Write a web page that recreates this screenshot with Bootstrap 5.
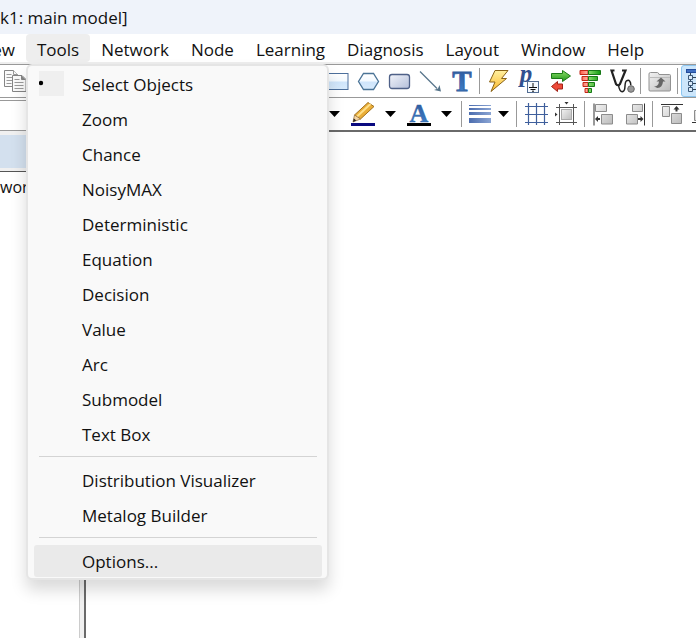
<!DOCTYPE html>
<html lang="en">
<head>
<meta charset="utf-8">
<meta name="viewport" content="width=device-width, initial-scale=1">
<title>Network1: main model</title>
<link href="https://cdn.jsdelivr.net/npm/bootstrap@5.3.0/dist/css/bootstrap.min.css" rel="stylesheet">
<style>
  body { font-family: "Open Sans", "Noto Sans", sans-serif; font-size: 17px; line-height: 24px; color: #111; background: #fff; }
  .app { min-height: 100vh; }
  .titlebar { height: 34px; background: #eff3fa; line-height: 36px; }
  .menubar { height: 31px; border-bottom: 1px solid #999; background: linear-gradient(#fff 28px, #eee 28px); }
  .menubar .menu-btn { height: 28px; padding: 4px 11px 0; font-size: inherit; line-height: 24px; border: 0; border-radius: 4px; color: #111; }
  .menubar .menu-first { width: 26px; padding-left: 0; display: flex; justify-content: flex-end; }
  .menubar .menu-btn.show { background: #eee; }
  .tools-menu.dropdown-menu { display: block; top: 100%; left: 0; width: 303px; margin: 0; padding: 1px 5px 1px 6px; font-size: inherit; color: #111; background: #f9f9f9; border: 2px solid #e5e5e5; border-radius: 6px; box-shadow: 0 10px 16px rgba(0,0,0,.15); }
  .tools-menu .dropdown-item { height: 35px; padding: 6px 0 5px 48px; line-height: 24px; color: #111; border-radius: 3px; position: relative; }
  .tools-menu .dropdown-item.current { height: 32px; margin-top: 7px; padding-top: 5px; background: #eaeaea; }
  .tools-menu .dropdown-divider { margin: 4px 5px 6px; border-color: #d4d4d4; opacity: 1; }
  .bullet-box { position: absolute; left: 5px; top: 4px; width: 25px; height: 25px; background: #efefef; }
  .toolbar { height: 33px; overflow: hidden; }
  .toolbar-main { border-bottom: 1px solid #999; }
  .toolbar-format { height: 32px; align-items: center; }
  .tool { flex: 0 0 31px; height: 32px; padding: 0; border: 0; background: none; display: flex; align-items: center; justify-content: center; }
  .tool-caret { flex-basis: 25px; }
  .tool-line { flex-basis: 29px; }
  .tool-caret-sm { flex-basis: 20px; }
  .tool-on { background: #cce6fb; border: 1px solid #8cc6f0; border-radius: 3px; justify-content: flex-start; padding-left: 3px; }
  .tool text { font-family: "Liberation Serif", serif; font-weight: 700; text-anchor: middle; }
  .rule { flex: 0 0 6px; height: 26px; margin-top: 3px; background: linear-gradient(90deg, transparent 2px, #999 2px, #999 3px, transparent 3px); }
  .toolbar-format .rule { margin-top: 0; }
  .gap-main { flex: 0 0 291px; }
  .font-box { flex: 0 0 322px; height: 30px; margin-top: 2px; border: 0; border-top: 1px solid #999; background: #fff; border-radius: 0; }
  .tree-pane { flex: 0 0 84px; background: #f0f0f0; border-top: 1px solid #999; padding-top: 4px; }
  .tree-head { height: 33px; background: #d3e0ee; margin-bottom: 3px; }
  .tree-body { border-top: 1px solid #555; border-right: 1px solid #ccc; background: #fff; margin-right: 4px; padding-top: 3px; font-size: 16px; }
  .canvas-pane { border-top: 2px solid #6a6a6a; border-left: 2px solid #6a6a6a; }
</style>
<script src="https://cdn.jsdelivr.net/npm/bootstrap@5.3.0/dist/js/bootstrap.bundle.min.js"></script>
</head>
<body>
<svg width="0" height="0" class="position-absolute" aria-hidden="true">
  <defs>
    <linearGradient id="gBlue" x1="0" y1="0" x2="0" y2="1"><stop offset="0" stop-color="#fff"/><stop offset=".45" stop-color="#f4faff"/><stop offset=".55" stop-color="#cfe5fb"/><stop offset="1" stop-color="#d9ebfc"/></linearGradient>
    <linearGradient id="gSub" x1="0" y1="0" x2="1" y2="1"><stop offset="0" stop-color="#f2f4fa"/><stop offset="1" stop-color="#b4bfda"/></linearGradient>
    <linearGradient id="gBolt" x1="0" y1="0" x2="0" y2="1"><stop offset="0" stop-color="#fff0a0"/><stop offset="1" stop-color="#fbb82a"/></linearGradient>
    <linearGradient id="gText" x1="0" y1="0" x2="0" y2="1"><stop offset="0" stop-color="#2d5597"/><stop offset="1" stop-color="#3f86d0"/></linearGradient>
    <linearGradient id="gGrey" x1="0" y1="0" x2="1" y2="1"><stop offset="0" stop-color="#f2f2f2"/><stop offset="1" stop-color="#bcbcbc"/></linearGradient>
    <linearGradient id="gGreen" x1="0" y1="0" x2="0" y2="1"><stop offset="0" stop-color="#8ee06a"/><stop offset="1" stop-color="#1d9418"/></linearGradient>
    <linearGradient id="gBars" x1="0" y1="0" x2="1" y2="0"><stop offset="0" stop-color="#8ade6e"/><stop offset="1" stop-color="#119a11"/></linearGradient>
    <linearGradient id="gRed" x1="0" y1="0" x2="1" y2="0"><stop offset="0" stop-color="#ff5c48"/><stop offset="1" stop-color="#ffb4a6"/></linearGradient>
    <linearGradient id="gBar" x1="0" y1="0" x2="1" y2="0"><stop offset="0" stop-color="#4b6cae"/><stop offset="1" stop-color="#8ba5d4"/></linearGradient>
  </defs>
</svg>
<div class="app d-flex flex-column">
  <header class="titlebar text-nowrap">k1: main model]</header>
  <nav class="menubar d-flex" aria-label="Main menu">
    <button type="button" class="btn menu-btn menu-first" aria-label="View">ew</button>
    <div class="dropdown">
      <button type="button" class="btn menu-btn show" aria-expanded="true">Tools</button>
      <div class="dropdown-menu tools-menu">
        <a class="dropdown-item" href="#"><span class="bullet-box"><svg class="d-block" width="25" height="25"><circle cx="2" cy="12" r="2.2" fill="#000"/></svg></span>Select Objects</a>
        <a class="dropdown-item" href="#">Zoom</a>
        <a class="dropdown-item" href="#">Chance</a>
        <a class="dropdown-item" href="#">NoisyMAX</a>
        <a class="dropdown-item" href="#">Deterministic</a>
        <a class="dropdown-item" href="#">Equation</a>
        <a class="dropdown-item" href="#">Decision</a>
        <a class="dropdown-item" href="#">Value</a>
        <a class="dropdown-item" href="#">Arc</a>
        <a class="dropdown-item" href="#">Submodel</a>
        <a class="dropdown-item" href="#">Text Box</a>
        <hr class="dropdown-divider">
        <a class="dropdown-item" href="#">Distribution Visualizer</a>
        <a class="dropdown-item" href="#">Metalog Builder</a>
        <hr class="dropdown-divider">
        <a class="dropdown-item current" href="#">Options...</a>
      </div>
    </div>
    <button type="button" class="btn menu-btn">Network</button>
    <button type="button" class="btn menu-btn">Node</button>
    <button type="button" class="btn menu-btn">Learning</button>
    <button type="button" class="btn menu-btn">Diagnosis</button>
    <button type="button" class="btn menu-btn">Layout</button>
    <button type="button" class="btn menu-btn">Window</button>
    <button type="button" class="btn menu-btn">Help</button>
  </nav>

  <div class="toolbar toolbar-main d-flex">
    <button type="button" class="tool" aria-label="Copy"><svg width="24" height="24" fill="#fafafa" stroke="#858585"><path d="M.5 1.500h9l4 4v12h-13z"/><path d="M9.500 1.500v4h4M2.500 5.500h5M2.500 8.500h7M2.500 11.500h7M2.500 14.500h5" stroke="#999"/><path d="M8.500 6.500h9.500l4 4v12H8.500z"/><path d="M17.500 6.500v4h4" fill="#888"/><path d="M10.500 10.500h5M10.500 13.500h9M10.500 16.500h9M10.500 19.500h9" stroke="#999"/></svg></button>
    <div class="gap-main"></div>
    <button type="button" class="tool" aria-label="Equation"><svg width="24" height="24"><rect x="1" y="4.500" width="21" height="16" fill="url(#gBlue)" stroke="#4c6f9c"/></svg></button>
    <button type="button" class="tool" aria-label="Decision"><svg width="24" height="24"><path d="M6.500 4.500h10l5 8-5 8h-10l-5-8z" fill="url(#gBlue)" stroke="#4a7396" stroke-width="1.300"/></svg></button>
    <button type="button" class="tool" aria-label="Submodel"><svg width="24" height="24"><rect x="1.500" y="5.500" width="20" height="14" rx="2.500" fill="url(#gSub)" stroke="#4f6188" stroke-width="1.300"/></svg></button>
    <button type="button" class="tool" aria-label="Arc"><svg width="24" height="24"><path d="M1 2.500L18 19.500" stroke="#56748a" stroke-width="1.300"/><path d="M22 22.500l-1.500-6.500-1.500 3.500-4 1.500z" fill="#56748a"/></svg></button>
    <button type="button" class="tool" aria-label="Text box"><svg width="24" height="24"><text x="12" y="22" font-size="29" fill="url(#gText)" stroke="#335f9e" stroke-width=".8">T</text></svg></button>
    <span class="rule"></span>
    <button type="button" class="tool" aria-label="Update"><svg width="24" height="24"><path d="M8 1.500h13l-6.500 8h5L4 22.500l4-9.500H2.500z" fill="url(#gBolt)" stroke="#8a6418"/></svg></button>
    <button type="button" class="tool" aria-label="Probability of evidence"><svg width="24" height="26"><text x="8" y="14" font-size="25" font-style="italic" fill="#315190">p</text><rect x="9.500" y="13.500" width="11" height="11" fill="#f5faff" stroke="#536d92"/><path d="M15 15v4M11 19.500h8M12.500 21.500h5M14 23.200h2" stroke="#111"/></svg></button>
    <button type="button" class="tool" aria-label="Compare"><svg width="24" height="26"><path d="M2.500 5.500h11V2.500l8 5.500-8 5.500v-3h-11z" fill="url(#gGreen)" stroke="#1b7a16"/><path d="M13.500 16h-5v-2.500L2.500 18.500l6 5V21h5z" fill="#ee4a38" stroke="#a32318"/></svg></button>
    <button type="button" class="tool" aria-label="Strength"><svg width="26" height="26"><g fill="url(#gRed)" stroke="#c22718"><path d="M1 2.500h8v4H1zM3 8.500h6v4H3zM4 14.500h5v4H4zM6 20.500h3v4H6z"/></g><g fill="url(#gBars)" stroke="#177817"><path d="M9.500 2.500h12v4h-12zM9.500 8.500h9v4h-9zM9.500 14.500h6v4h-6zM9.500 20.500h3v4h-3z"/></g></svg></button>
    <button type="button" class="tool" aria-label="Diagnosis"><svg width="26" height="26" fill="none" stroke="#222" stroke-width="2.200"><path d="M4.500 2.500H1.500L6 16q2 2.500 4 0L15.500 2.500h-3.500"/><path d="M8.500 17q1 7.500 4.500 6.500c3.500-1 .5-9 3.800-10.800 2.500-1.200 4 1 4 4.500" stroke-width="1.500"/><circle cx="21" cy="21" r="3.300" fill="#999" stroke="#666" stroke-width="1"/></svg></button>
    <span class="rule"></span>
    <button type="button" class="tool" aria-label="Up one level"><svg width="24" height="24"><path d="M1 21V5q0-1.500 1.500-1.500h7q1 0 1.500 2h10.500q1 0 1 1V21q0 1-1 1H2q-1 0-1-1z" fill="url(#gGrey)" stroke="#929292"/><path d="M2 8.500h20" stroke="#bbb"/><path d="M6 17.500q4.500 0 5-5H8.500L13 8.500l4.500 4H15q-.5 6-5.500 6.500z" fill="#666"/></svg></button>
    <span class="rule"></span>
    <button type="button" class="tool tool-on" aria-label="Tree view"><svg width="26" height="28"><path d="M5.500 6v17M5 10.500h10M5 16.500h10M5 22.500h10" stroke="#345"/><rect x="1.500" y="2.500" width="20" height="3" fill="#3f6fc2" stroke="#234d9c"/><path d="M3.500 8.500h4v4h-4zM3.500 14.500h4v4h-4zM3.500 20.500h4v4h-4zM11.500 8.500h9v4h-9zM11.500 14.500h9v4h-9zM11.500 20.500h9v4h-9z" fill="#dbeaf8" stroke="#3b5878"/></svg></button>
  </div>

  <div class="toolbar toolbar-format d-flex">
    <input class="font-box" type="text" aria-label="Font">
    <button type="button" class="tool tool-caret" aria-label="Fill colour choices"><svg width="12" height="6"><path d="M0 0h11l-5.500 6z"/></svg></button>
    <button type="button" class="tool" aria-label="Line colour"><svg width="26" height="26"><path d="M1 22h24v3H1z" fill="#0a0a80"/><path d="M18 1.500l6 4L10.500 18l-6-4z" fill="#eaae38" stroke="#a1701d"/><path d="M20.500 3L7 15.500" stroke="#ffe08a" stroke-width="2"/><path d="M4.500 14l6 4L3 21z" fill="#f5d5a3" stroke="#8f6a35" stroke-width=".7"/><path d="M3.800 17.500l2.500 2L3 21z" fill="#222"/></svg></button>
    <button type="button" class="tool tool-caret" aria-label="Line colour choices"><svg width="12" height="6"><path d="M0 0h11l-5.500 6z"/></svg></button>
    <button type="button" class="tool" aria-label="Text colour"><svg width="26" height="26"><path d="M1 22h24v3H1z"/><text x="13" y="21" font-size="26" fill="url(#gText)" stroke="#335f9e" stroke-width=".4">A</text></svg></button>
    <button type="button" class="tool tool-caret" aria-label="Text colour choices"><svg width="12" height="6"><path d="M0 0h11l-5.500 6z"/></svg></button>
    <span class="rule"></span>
    <button type="button" class="tool tool-line" aria-label="Line width"><svg width="24" height="20" fill="url(#gBar)"><path d="M1 1h22v1H1zM1 4h22v2H1zM1 8h22v3H1zM1 14h22v5H1z"/></svg></button>
    <button type="button" class="tool tool-caret-sm" aria-label="Line width choices"><svg width="12" height="6"><path d="M0 0h11l-5.500 6z"/></svg></button>
    <span class="rule"></span>
    <button type="button" class="tool" aria-label="Show grid"><svg width="24" height="24" fill="none"><path d="M4.500 1v22M12.500 1v22M20.500 1v22M1 4.500h23M1 12.500h23M1 20.500h23" stroke="#3f5f9c" stroke-width="1.200"/></svg></button>
    <button type="button" class="tool" aria-label="Snap to grid"><svg width="24" height="26" fill="none" stroke="#555"><path d="M4.500 3v21M18.500 3v21M1 6.500h21M1 21.500h21"/><rect x="6.500" y="8.500" width="10" height="10" fill="url(#gGrey)" stroke="#aaa"/><path d="M9.500 1h4l-2 2.500zM0 11.500v4l2.500-2z" fill="#333" stroke="none"/></svg></button>
    <span class="rule"></span>
    <button type="button" class="tool" aria-label="Align left"><svg width="24" height="24"><path d="M2 1.500v22" stroke="#333"/><path d="M3.500 2.500h11v7h-11zM9.500 12.500h11v9.500h-11z" fill="url(#gGrey)" stroke="#8c8c8c"/><path d="M8 17H5" stroke="#333" stroke-width="2"/><path d="M3 17l3-3v6z" fill="#333"/></svg></button>
    <button type="button" class="tool" aria-label="Align right"><svg width="24" height="24"><path d="M21.500 1.500v22" stroke="#333"/><path d="M9.500 2.500h10v7h-10zM3.500 12.500h11v9.500h-11z" fill="url(#gGrey)" stroke="#8c8c8c"/><path d="M15 17h3" stroke="#333" stroke-width="2"/><path d="M20.500 17l-3-3v6z" fill="#333"/></svg></button>
    <span class="rule"></span>
    <button type="button" class="tool" aria-label="Align top"><svg width="24" height="24"><path d="M1 2.500h22" stroke="#333"/><path d="M2.500 4.500h7v10h-7zM11.500 11.500h10v10h-10z" fill="url(#gGrey)" stroke="#8c8c8c"/><path d="M16.500 9.500V7" stroke="#333" stroke-width="2"/><path d="M16.500 4l-3 3.500h6z" fill="#333"/></svg></button>
    <button type="button" class="tool" aria-label="Align bottom"><svg width="24" height="24"><path d="M1 20.500h22" stroke="#333"/><path d="M3.500 8.500h8v10h-8zM13.500 3.500h8v8h-8z" fill="url(#gGrey)" stroke="#8c8c8c"/></svg></button>
  </div>

  <div class="d-flex flex-grow-1">
    <aside class="tree-pane d-flex flex-column">
      <div class="tree-head"></div>
      <div class="tree-body flex-grow-1" aria-label="Network tree">wor</div>
    </aside>
    <main class="canvas-pane flex-grow-1"></main>
  </div>
</div>
</body>
</html>
